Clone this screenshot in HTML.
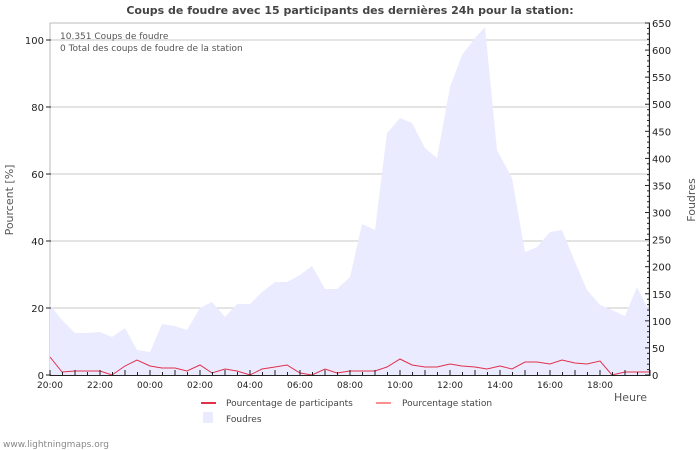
<!DOCTYPE html>
<html><head><meta charset="utf-8"><style>
html,body{margin:0;padding:0;background:#fff;width:700px;height:450px;overflow:hidden}
svg{display:block;font-family:"DejaVu Sans","Liberation Sans",sans-serif}
</style></head><body>
<svg id="s" width="700" height="450" viewBox="0 0 700 450">
<text x="350" y="14" text-anchor="middle" font-size="11" font-weight="bold" fill="#444">Coups de foudre avec 15 participants des dernières 24h pour la station:</text>
<rect x="50" y="23" width="599" height="352" fill="#fff" stroke="#bbb" stroke-width="1"/>
<g id="grid" stroke="#c8c8c8" stroke-width="1"></g>
<polygon fill="#ebebff" points="50,375 50,305 62,320 75,333 87,333 100,332 112,337 125,328 137,350 150,352 162,324 175,326 187,330 200,308 212,302 225,317 237,304 250,304 262,292 275,282 287,282 300,275 312,266 325,289 337,289 350,277 362,224 375,230 387,133 400,118 412,123 425,148 437,158 450,87 462,55 475,38 485,27 497,150 512,178 525,252 537,247 550,232 562,230 575,262 587,290 600,305 612,310 625,316 637,287 650,313 650,375"/>
<polyline fill="none" stroke="#e0304a" stroke-width="1" points="50,357 62,372 75,371 87,371 100,371 112,375 125,366 137,360 150,366 162,368 175,368 187,371 200,365 212,373 225,369 237,371 250,375 262,369 275,367 287,365 300,373 312,375 325,369 337,373 350,371 362,371 375,371 387,367 400,359 412,365 425,367 437,367 450,364 462,366 475,367 487,369 500,366 512,369 525,362 537,362 550,364 562,360 575,363 587,364 600,361 612,375 625,372 637,372 650,372"/>
<g id="ax" fill="#222" font-size="10"></g>
<text x="60" y="39" font-size="9" fill="#555">10.351  Coups de foudre</text>
<text x="60" y="51" font-size="9" fill="#555">0 Total des coups de foudre de la station</text>
<text transform="translate(13,200) rotate(-90)" text-anchor="middle" font-size="11" fill="#555">Pourcent   [%]</text>
<text transform="translate(695,200) rotate(-90)" text-anchor="middle" font-size="11" fill="#555">Foudres</text>
<text x="647" y="401" text-anchor="end" font-size="11" fill="#555">Heure</text>
<line x1="201" y1="403" x2="216" y2="403" stroke="#e0304a" stroke-width="2"/>
<text x="226" y="406" font-size="9" fill="#444">Pourcentage de participants</text>
<line x1="376" y1="403" x2="391" y2="403" stroke="#ff9090" stroke-width="2"/>
<text x="402" y="406" font-size="9" fill="#444">Pourcentage station</text>
<rect x="203" y="412" width="10" height="11" fill="#ebebff"/>
<text x="226" y="422" font-size="9" fill="#444">Foudres</text>
<text x="3" y="447" font-size="9" fill="#888">www.lightningmaps.org</text>
</svg>
<script>
var NS="http://www.w3.org/2000/svg",ax=document.getElementById("ax"),gr=document.getElementById("grid");
function el(p,t,a,txt){var e=document.createElementNS(NS,t);for(var k in a)e.setAttribute(k,a[k]);if(txt!=null)e.textContent=txt;p.appendChild(e);return e;}
for(var v=0;v<=100;v+=20){var y=375-v*3.35;if(v>0)el(gr,"line",{x1:50,x2:649,y1:y,y2:y});el(ax,"line",{x1:46,x2:51,y1:y,y2:y,stroke:"#222"});el(ax,"text",{x:44,y:y+4,"text-anchor":"end"},v);}
for(var v=0;v<=650;v+=10){var y=375-v*352/650;el(ax,"line",{x1:v%50?647:645,x2:650,y1:y,y2:y,stroke:"#222"});if(v%50==0)el(ax,"text",{x:652,y:y+4},v);}
el(ax,"line",{x1:649.5,x2:649.5,y1:23,y2:375,stroke:"#222"});
el(ax,"line",{x1:50,x2:650,y1:375.5,y2:375.5,stroke:"#222"});
for(var h=0;h<=24;h++){var x=50+h*25;el(ax,"line",{x1:x,x2:x,y1:370,y2:376,stroke:"#222"});if(h%2==0&&h<24){var hr=(20+h)%24;el(ax,"text",{x:x,y:388,"text-anchor":"middle","font-size":9},(hr<10?"0":"")+hr+":00");}}
for(var h=0;h<24;h++){var x=62.5+h*25;el(ax,"line",{x1:x,x2:x,y1:372,y2:376,stroke:"#222"});}
</script>
</body></html>
